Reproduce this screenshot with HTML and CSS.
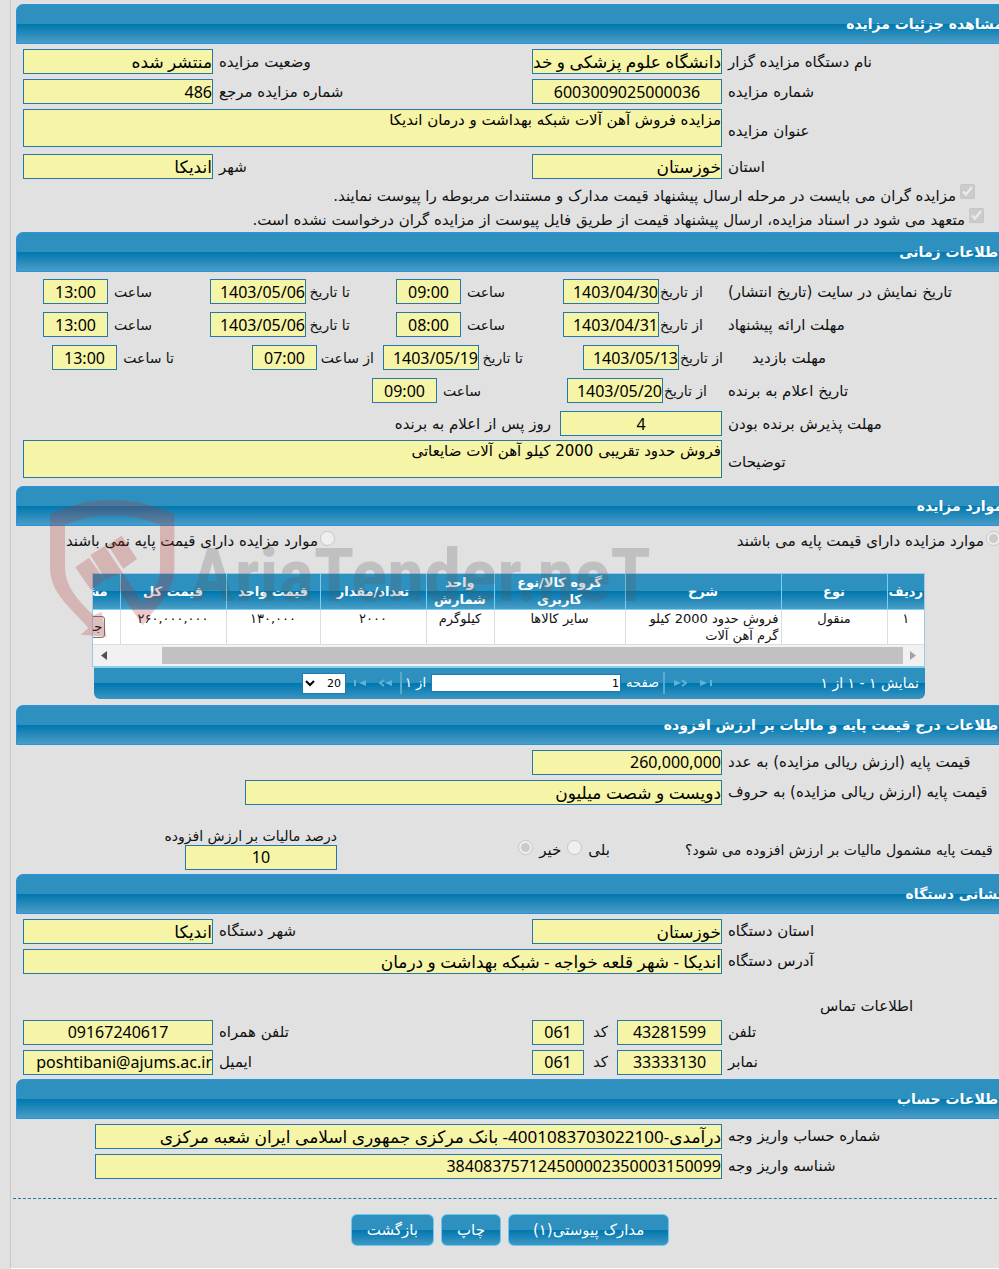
FILE: index.html
```html
<!DOCTYPE html>
<html lang="fa" dir="rtl">
<head>
  <meta charset="UTF-8" />
  <meta name="viewport" content="width=device-width, initial-scale=1.0" />
  <title>مشاهده جزئیات مزایده</title>
  <link rel="stylesheet" href="styles.css">
</head>
<body>
  <main class="sheet">
    <section>
      <h2 class="title">مشاهده جزئیات مزایده</h2>
      <div class="fields general">
        <div class="row">
          <label class="lead" for="orgName">نام دستگاه مزایده گزار</label>
          <input type="text" class="field" id="orgName" value="دانشگاه علوم پزشکی و خدمات بهداشتی" readonly />
          <label class="second" for="status">وضعیت مزایده</label>
          <input type="text" class="field" id="status" value="منتشر شده" readonly />
        </div>
        <div class="row">
          <label class="lead" for="number">شماره مزایده</label>
          <input type="text" class="field num center" id="number" value="6003009025000036" readonly />
          <label class="second" for="refNumber">شماره مزایده مرجع</label>
          <input type="text" class="field num" id="refNumber" value="486" readonly />
        </div>
        <div class="row area-row">
          <label class="lead" for="subject">عنوان مزایده</label>
          <textarea class="field grow" id="subject" readonly>مزایده فروش آهن آلات شبکه بهداشت و درمان اندیکا</textarea>
        </div>
        <div class="row">
          <label class="lead" for="province">استان</label>
          <input type="text" class="field" id="province" value="خوزستان" readonly />
          <label class="second" for="city">شهر</label>
          <input type="text" class="field" id="city" value="اندیکا" readonly />
        </div>
        <div class="checks">
          <div class="check first">
            <input type="checkbox" id="attachDocs" checked disabled />
            <label for="attachDocs">مزایده گران می بایست در مرحله ارسال پیشنهاد قیمت مدارک و مستندات مربوطه را پیوست نمایند.</label>
          </div>
          <div class="check">
            <input type="checkbox" id="noFile" checked disabled />
            <label for="noFile">متعهد می شود در اسناد مزایده، ارسال پیشنهاد قیمت از طریق فایل پیوست از مزایده گران درخواست نشده است.</label>
          </div>
        </div>
      </div>
    </section>

    <section>
      <h2 class="title">اطلاعات زمانی</h2>
      <div class="fields times">
        <div class="row">
          <span class="lead">تاریخ نمایش در سایت (تاریخ انتشار)</span>
          <div class="pair from"><label for="showFrom">از تاریخ</label><input type="text" class="field num date" id="showFrom" value="1403/04/30" readonly /></div>
          <div class="pair hour"><label for="showFromHour">ساعت</label><input type="text" class="field num time" id="showFromHour" value="09:00" readonly /></div>
          <div class="pair from"><label for="showTo">تا تاریخ</label><input type="text" class="field num date" id="showTo" value="1403/05/06" readonly /></div>
          <div class="pair"><label for="showToHour">ساعت</label><input type="text" class="field num time" id="showToHour" value="13:00" readonly /></div>
        </div>
        <div class="row">
          <span class="lead">مهلت ارائه پیشنهاد</span>
          <div class="pair from"><label for="offerFrom">از تاریخ</label><input type="text" class="field num date" id="offerFrom" value="1403/04/31" readonly /></div>
          <div class="pair hour"><label for="offerFromHour">ساعت</label><input type="text" class="field num time" id="offerFromHour" value="08:00" readonly /></div>
          <div class="pair from"><label for="offerTo">تا تاریخ</label><input type="text" class="field num date" id="offerTo" value="1403/05/06" readonly /></div>
          <div class="pair"><label for="offerToHour">ساعت</label><input type="text" class="field num time" id="offerToHour" value="13:00" readonly /></div>
        </div>
        <div class="row visit">
          <span class="lead">مهلت بازدید</span>
          <div class="pair from"><label for="visitFrom">از تاریخ</label><input type="text" class="field num date" id="visitFrom" value="1403/05/13" readonly /></div>
          <div class="pair hour"><label for="visitTo">تا تاریخ</label><input type="text" class="field num date" id="visitTo" value="1403/05/19" readonly /></div>
          <div class="pair from wide"><label for="visitFromHour">از ساعت</label><input type="text" class="field num time" id="visitFromHour" value="07:00" readonly /></div>
          <div class="pair wide"><label for="visitToHour">تا ساعت</label><input type="text" class="field num time" id="visitToHour" value="13:00" readonly /></div>
        </div>
        <div class="row winner">
          <span class="lead">تاریخ اعلام به برنده</span>
          <div class="pair from"><label for="winnerDate">از تاریخ</label><input type="text" class="field num date" id="winnerDate" value="1403/05/20" readonly /></div>
          <div class="pair"><label for="winnerHour">ساعت</label><input type="text" class="field num time" id="winnerHour" value="09:00" readonly /></div>
        </div>
        <div class="row accept">
          <label class="lead" for="acceptDays">مهلت پذیرش برنده بودن</label>
          <input type="text" class="field num center days" id="acceptDays" value="4" readonly />
          <span class="after">روز پس از اعلام به برنده</span>
        </div>
        <div class="row area-row">
          <label class="lead" for="notes">توضیحات</label>
          <textarea class="field grow" id="notes" readonly>فروش حدود تقریبی 2000 کیلو آهن آلات ضایعاتی</textarea>
        </div>
      </div>
    </section>

    <section class="items">
      <h2 class="title">موارد مزایده</h2>
      <div class="options">
        <div class="option">
          <input type="radio" name="basePrice" id="hasBase" checked disabled />
          <label for="hasBase">موارد مزایده دارای قیمت پایه می باشند</label>
        </div>
        <div class="option">
          <input type="radio" name="basePrice" id="noBase" disabled />
          <label for="noBase">موارد مزایده دارای قیمت پایه نمی باشند</label>
        </div>
      </div>
      <div class="grid">
        <div class="grid-view">
          <table>
            <colgroup>
              <col class="w-index"><col class="w-money"><col class="w-desc"><col class="w-group"><col class="w-unit"><col class="w-money"><col class="w-price"><col class="w-money"><col class="w-more">
            </colgroup>
            <thead>
              <tr>
                <th>ردیف</th>
                <th>نوع</th>
                <th>شرح</th>
                <th>گروه کالا/نوع کاربری</th>
                <th>واحد شمارش</th>
                <th>تعداد/مقدار</th>
                <th>قیمت واحد</th>
                <th>قیمت کل</th>
                <th>مشاهده</th>
              </tr>
            </thead>
            <tbody>
              <tr>
                <td>۱</td>
                <td>منقول</td>
                <td class="desc">فروش حدود 2000 کیلو گرم آهن آلات</td>
                <td>سایر کالاها</td>
                <td>کیلوگرم</td>
                <td>۲۰۰۰</td>
                <td>۱۳۰,۰۰۰</td>
                <td>۲۶۰,۰۰۰,۰۰۰</td>
                <td class="more"><button type="button" class="detail">جزئیات</button></td>
              </tr>
            </tbody>
          </table>
          <div class="scrollbar">
            <svg width="6" height="9" viewBox="0 0 6 9"><path d="M0 0L6 4.500L0 9Z" fill="#a3a3a3"/></svg>
            <div class="thumb"></div>
            <svg width="6" height="9" viewBox="0 0 6 9"><path d="M6 0L0 4.500L6 9Z" fill="#505050"/></svg>
          </div>
        </div>
        <div class="pager">
          <span class="info">نمایش ۱ - ۱ از ۱</span>
          <div class="pages">
            <button type="button" class="nav" aria-label="صفحه اول"><svg width="13" height="8" viewBox="0 0 13 8"><path d="M0 1L7 4L0 7ZM10 1H12V7H10Z"/></svg></button>
            <button type="button" class="nav" aria-label="صفحه قبل"><svg width="13" height="8" viewBox="0 0 13 8"><path d="M0 1L7 4L0 7Z"/><path class="line" d="M8 1L12 4L8 7"/></svg></button>
            <span class="sep"></span>
            <label for="page">صفحه</label>
            <input type="text" id="page" class="page" value="1" />
            <span class="total">از ۱</span>
            <span class="sep"></span>
            <button type="button" class="nav" aria-label="صفحه بعد"><svg width="13" height="8" viewBox="0 0 13 8"><path d="M13 1L6 4L13 7Z"/><path class="line" d="M5 1L1 4L5 7"/></svg></button>
            <button type="button" class="nav" aria-label="صفحه آخر"><svg width="13" height="8" viewBox="0 0 13 8"><path d="M13 1L6 4L13 7ZM1 1H3V7H1Z"/></svg></button>
            <select class="size" aria-label="تعداد در صفحه"><option>20</option></select>
          </div>
        </div>
      </div>
      <div class="watermark">
        <svg width="150" height="155" viewBox="0 0 450 465">
          <path d="M30 72Q215 -14 403 72V235C401 310 352 345 308 405L285 370C340 310 358 285 360 235V104Q217 48 75 104V235C77 300 130 345 160 376L185 366L200 440L122 434L145 414C85 345 32 310 30 235Z"/>
          <path d="M152 195L194 169L305 335L335 300L340 362L308 405L238 303L242 250L195 268Z"/>
          <path d="M152 195L194 169L243 243L238 303L308 405L305 335L243 243L199 270Z"/>
          <path d="M106 232L147 203L194 271L153 300Z"/>
          <path d="M203 165L245 137L291 207L250 236Z"/>
        </svg>
        <span class="brand" dir="ltr">AriaTender.neT</span>
      </div>
    </section>

    <section>
      <h2 class="title">اطلاعات درج قیمت پایه و مالیات بر ارزش افزوده</h2>
      <div class="fields">
        <div class="row">
          <label class="lead" for="price">قیمت پایه (ارزش ریالی مزایده) به عدد</label>
          <input type="text" class="field num" id="price" value="260,000,000" readonly />
        </div>
        <div class="row">
          <label class="lead" for="priceWords">قیمت پایه (ارزش ریالی مزایده) به حروف</label>
          <input type="text" class="field words" id="priceWords" value="دویست و شصت میلیون" readonly />
        </div>
        <div class="row vat">
          <span class="question">قیمت پایه مشمول مالیات بر ارزش افزوده می شود؟</span>
          <div class="answers">
            <label for="vatYes">بلی</label>
            <input type="radio" name="vat" id="vatYes" disabled />
            <label for="vatNo">خیر</label>
            <input type="radio" name="vat" id="vatNo" checked disabled />
          </div>
          <div class="percent">
            <label for="vatPercent">درصد مالیات بر ارزش افزوده</label>
            <input type="text" class="field num center" id="vatPercent" value="10" readonly />
          </div>
        </div>
      </div>
    </section>

    <section>
      <h2 class="title">نشانی دستگاه</h2>
      <div class="fields">
        <div class="row">
          <label class="lead" for="orgProvince">استان دستگاه</label>
          <input type="text" class="field" id="orgProvince" value="خوزستان" readonly />
          <label class="second" for="orgCity">شهر دستگاه</label>
          <input type="text" class="field" id="orgCity" value="اندیکا" readonly />
        </div>
        <div class="row">
          <label class="lead" for="address">آدرس دستگاه</label>
          <input type="text" class="field grow" id="address" value="اندیکا - شهر قلعه خواجه - شبکه بهداشت و درمان" readonly />
        </div>
        <h3 class="subtitle">اطلاعات تماس</h3>
        <div class="row">
          <label class="lead" for="phone">تلفن</label>
          <input type="text" class="field num center phone" id="phone" value="43281599" readonly />
          <label class="code-label" for="phoneCode">کد</label>
          <input type="text" class="field num center code" id="phoneCode" value="061" readonly />
          <label class="second" for="mobile">تلفن همراه</label>
          <input type="text" class="field num center" id="mobile" value="09167240617" readonly />
        </div>
        <div class="row">
          <label class="lead" for="fax">نمابر</label>
          <input type="text" class="field num center phone" id="fax" value="33333130" readonly />
          <label class="code-label" for="faxCode">کد</label>
          <input type="text" class="field num center code" id="faxCode" value="061" readonly />
          <label class="second" for="email">ایمیل</label>
          <input type="text" class="field num" id="email" value="poshtibani@ajums.ac.ir" readonly />
        </div>
      </div>
    </section>

    <section>
      <h2 class="title">اطلاعات حساب</h2>
      <div class="fields">
        <div class="row">
          <label class="lead" for="account">شماره حساب واریز وجه</label>
          <input type="text" class="field long" id="account" value="درآمدی-4001083703022100- بانک مرکزی جمهوری اسلامی ایران شعبه مرکزی" readonly />
        </div>
        <div class="row">
          <label class="lead" for="payId">شناسه واریز وجه</label>
          <input type="text" class="field num long" id="payId" value="384083757124500002350003150099" readonly />
        </div>
      </div>
    </section>

    <div class="actions">
      <button type="button" class="btn attach">مدارک پیوستی(۱)</button>
      <button type="button" class="btn">چاپ</button>
      <button type="button" class="btn">بازگشت</button>
    </div>
  </main>
</body>
</html>
```

FILE: styles.css
```css
* {
  box-sizing: border-box;
}
body {
  margin: 0;
  background-color: #e1e1e1;
  color: #111;
  font-family: "DejaVu Sans", Tahoma, sans-serif;
  font-size: 15px;
  line-height: 20px;
  overflow: hidden;
}
input, textarea, select, button {
  font-family: inherit;
}
/* the sheet runs a little past the window on the right */
.sheet {
  margin: 0 -8px 0 10px;
  padding: 4px 0 0 5px;
  border-left: 1px solid #c8c8c8;
  border-bottom: 1px solid #fff;
}
.title {
  height: 40px;
  margin: 0;
  padding: 0 3px;
  border: 1px solid #2b92dd;
  border-radius: 7px 7px 0 0;
  background: linear-gradient(#2e90be 50%, #0077af 50%, #4a9dc6);
  color: #fff;
  font-size: 14px;
  line-height: 38px;
}
.fields {
  display: flex;
  flex-direction: column;
  gap: 5px;
  padding: 5px 0 4px 7px;
}
.general {
  padding-bottom: 0;
}
.row {
  display: flex;
  align-items: center;
  gap: 6px;
}
.row label, .row span {
  white-space: nowrap;
}
.area-row {
  height: 40px;
  align-items: flex-start;
}
.area-row .lead {
  line-height: 44px;
}
.lead {
  flex: 0 0 279px;
  text-align: left;
}
.second {
  flex: 1;
  text-align: left;
}
.field {
  width: 190px;
  height: 25px;
  margin: 0;
  padding: 0;
  border: 1px solid #2478ab;
  background-color: #f6f4a6;
  color: #000;
  font-family: "Noto Sans", "DejaVu Sans", sans-serif;
  font-size: 17px;
  outline: none;
}
.num {
  font-size: 16px;
}
.center {
  text-align: center;
}
textarea.field {
  height: 38px;
  font-size: 15px;
  line-height: 20px;
  font-family: "DejaVu Sans", sans-serif;
  resize: none;
  overflow: hidden;
}
.grow {
  flex: 1;
}
.words {
  width: 477px;
}
.long {
  width: 627px;
}
.phone {
  width: 105px;
}
.code-label {
  width: 21px;
  text-align: center;
}
.code {
  width: 52px;
}
.days {
  width: 162px;
}

.check {
  display: flex;
  gap: 4px;
  height: 24px;
  padding-right: 23px;
  line-height: 24px;
  white-space: nowrap;
}
.check.first {
  padding-right: 32px;
}
.check input, .option input, .answers input {
  width: 15px;
  height: 15px;
  margin: 0;
}

.times {
  gap: 8px;
  padding: 7px 0 6px 7px;
}
.times .row {
  gap: 0;
}
.pair {
  display: flex;
  align-items: center;
}
.pair label {
  width: 44px;
  font-size: 14px;
}
.pair.wide label {
  width: 57px;
}
.lead + .pair {
  margin-right: 25px;
}
.from {
  flex: 0 0 198px;
}
.hour {
  flex: 0 0 155px;
}
.date {
  width: 96px;
}
.time {
  width: 65px;
  text-align: center;
}
.visit .lead {
  flex-basis: 255px;
}
.visit .lead + .pair {
  margin-right: 29px;
}
.visit .from {
  flex-basis: 200px;
}
.visit .hour {
  flex-basis: 149px;
}
.winner .lead + .pair {
  margin-right: 21px;
  flex-basis: 226px;
}
.times .accept {
  gap: 6px;
}
.times .area-row {
  gap: 6px;
  margin-top: -4px;
}
.after {
  margin-right: 3px;
}

.items {
  position: relative;
}
.options {
  display: flex;
  padding: 5px 6px 0 0;
  height: 47px;
}
.option {
  display: flex;
  gap: 2px;
  flex: 0 0 666px;
  white-space: nowrap;
}
.grid {
  width: 833px;
  margin: 0 82px 6px 0;
}
.grid-view {
  border: 1px solid #a0c8e4;
  background-color: #fff;
  overflow: hidden;
}
.grid table {
  width: 879px;
  table-layout: fixed;
  border-collapse: collapse;
  font-size: 13px;
  line-height: 17px;
}
.w-index { width: 37px; }
.w-money { width: 106px; }
.w-desc { width: 156px; }
.w-group { width: 131px; }
.w-unit { width: 68px; }
.w-price { width: 94px; }
.w-more { width: 75px; }
.grid thead {
  background: linear-gradient(#2e90be 50%, #0077af 50%, #4a9dc6);
}
.grid th {
  height: 35px;
  padding: 0;
  border-left: 1px solid #78d0f4;
  border-bottom: 1px solid #78d0f4;
  color: #fff;
}
.grid td {
  height: 35px;
  padding: 0 2px;
  border-left: 1px solid #ddd;
  border-bottom: 1px solid #ddd;
  text-align: center;
  vertical-align: top;
}
.grid td.desc {
  text-align: right;
}
.grid td.more {
  vertical-align: middle;
}
.detail {
  height: 22px;
  padding: 0 2px;
  border: 1px solid #767676;
  border-radius: 3px;
  background-color: #efefef;
}
.scrollbar {
  display: flex;
  align-items: center;
  height: 21px;
  padding: 0 8px;
  background-color: #f1f1f1;
}
.thumb {
  flex: 1;
  height: 17px;
  margin: 0 7px 0 55px;
  background-color: #c1c1c1;
}
.pager {
  display: flex;
  align-items: center;
  height: 32px;
  margin-left: 2px;
  border-top: 1px solid #78d0f4;
  border-radius: 0 0 6px 6px;
  background: linear-gradient(#2e90be 50%, #0077af 50%, #3b95c2);
  color: #fff;
  font-size: 13px;
}
.info {
  flex: 0 0 212px;
  padding-right: 6px;
  font-size: 14px;
}
.pages {
  display: flex;
  align-items: center;
}
.nav {
  display: flex;
  width: 26px;
  padding: 0;
  border: none;
  background: none;
}
.nav svg {
  fill: #62b2d8;
}
.nav .line {
  fill: none;
  stroke: #62b2d8;
  stroke-width: 2;
}
.sep {
  width: 2px;
  height: 22px;
  margin: 0 0 0 8px;
  background-color: #5ba9cd;
}
.nav + .sep {
  margin: 0 -4px 0 4px;
}
.pages label {
  margin: 0 0 0 5px;
}
.total {
  margin: 0 5px 0 3px;
}
.page {
  width: 190px;
  height: 18px;
  padding: 0 1px;
  border: 1px solid #2478ab;
  background-color: #fff;
  font-size: 11px;
}
.size {
  width: 44px;
  height: 21px;
  margin: 0 -6px 0 0;
  border: 1px solid #2478ab;
  background-color: #fff;
  font-size: 11px;
}
.watermark {
  position: absolute;
  top: 4px;
  left: 24px;
  direction: ltr;
  display: flex;
  pointer-events: none;
}
.watermark svg {
  flex-shrink: 0;
  fill: #b53131;
  opacity: 0.25;
}
.brand {
  margin-top: 40px;
  color: #5a5a5a;
  font: bold 75px/90px "Roboto Condensed", sans-serif;
  opacity: 0.24;
}

.row.vat {
  align-items: flex-end;
  gap: 0;
  margin-top: 18px;
}
.question {
  flex: 0 0 322px;
  margin-bottom: 10px;
  font-size: 14px;
  text-align: left;
}
.answers {
  display: flex;
  gap: 6px;
  flex: 0 0 273px;
  margin: 0 75px 10px 0;
}
.percent {
  width: 152px;
}
.percent label {
  display: block;
  font-size: 14px;
  line-height: 17px;
}
.percent .field {
  display: block;
  width: 152px;
}
.subtitle {
  margin: 17px 0 -1px;
  width: 187px;
  font-size: 15px;
  font-weight: normal;
  text-align: left;
}
.actions {
  display: flex;
  justify-content: center;
  gap: 7px;
  margin: 15px 0 0 -3px;
  padding: 15px 0 22px;
  border-top: 1px dashed #2478ab;
}
.btn {
  height: 32px;
  padding: 0 15px;
  border: 1px solid #6cc8f0;
  border-radius: 6px;
  background: linear-gradient(#2e90be 50%, #0077af 50%, #3f97c3);
  color: #fff;
  font-size: 15px;
}
.attach {
  padding: 0 24px;
}
```
